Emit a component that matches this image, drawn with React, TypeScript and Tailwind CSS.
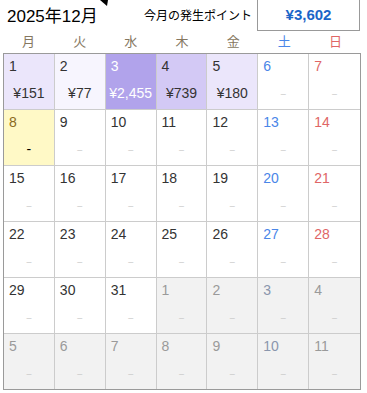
import React from "react";

const amounts: Record<number, { amt: string; bg: string; white?: boolean }> = {
  1: { amt: "¥151", bg: "bg-[#ebe6fb]" },
  2: { amt: "¥77", bg: "bg-[#f7f5fe]" },
  3: { amt: "¥2,455", bg: "bg-[#b1a3eb]", white: true },
  4: { amt: "¥739", bg: "bg-[#d3c9f5]" },
  5: { amt: "¥180", bg: "bg-[#ebe6fb]" },
};

export default function App() {
  const cells: { d: number; cur: boolean; dow: number }[] = [];
  for (let d = 1; d <= 31; d++) cells.push({ d, cur: true, dow: (d - 1) % 7 });
  for (let d = 1; d <= 11; d++) cells.push({ d, cur: false, dow: (31 + d - 1) % 7 });
  const weekdays = ["月", "火", "水", "木", "金", "土", "日"];
  const font = { fontFamily: '"Liberation Sans", Arial, "Noto Sans CJK JP", sans-serif' };

  return (
    <div className="w-[367px] h-[393px] bg-white relative overflow-hidden" style={font}>
      <div className="flex items-center h-[31px]">
        <div className="pl-[7px] text-[17px] text-black leading-none pt-[2px]">2025年12月</div>
        <svg className="absolute left-[100px] top-0" width="8" height="6" viewBox="0 0 8 6">
          <polygon points="0,0 8,0 7,6" fill="#000" />
        </svg>
        <div className="ml-auto flex items-center">
          <div className="text-[12px] text-black mr-[5px]">今月の発生ポイント</div>
          <div className="w-[103px] h-[31px] mr-[7px] border border-[#999] border-t-0 flex items-center justify-center text-[15px] font-bold text-[#1b65c8]">
            ¥3,602
          </div>
        </div>
      </div>
      <div className="ml-[3px] w-[358px] grid grid-cols-7 h-[22px] items-center">
        {weekdays.map((w, i) => (
          <div
            key={w}
            className={`text-center text-[13px] ${i === 5 ? "text-[#4a86e8]" : i === 6 ? "text-[#e06666]" : "text-[#85775f]"}`}
          >
            {w}
          </div>
        ))}
      </div>
      <div className="ml-[3px] w-[358px] border border-[#9a9a9a] grid grid-cols-7">
        {cells.map((c, i) => {
          const col = i % 7;
          const row = Math.floor(i / 7);
          const a = c.cur ? amounts[c.d] : undefined;
          const today = c.cur && c.d === 8;
          let bg = c.cur ? "bg-white" : "bg-[#f2f2f2]";
          if (a) bg = a.bg;
          if (today) bg = "bg-[#fff9c6]";
          let numColor = "text-[#333333]";
          if (c.cur) {
            if (c.dow === 5) numColor = "text-[#4a86e8]";
            if (c.dow === 6) numColor = "text-[#e06666]";
            if (a?.white) numColor = "text-white";
            if (today) numColor = "text-[#8a6a20]";
          } else {
            numColor = c.dow === 5 ? "text-[#8a96ad]" : "text-[#9a9a9a]";
          }
          return (
            <div
              key={i}
              className={`flex flex-col ${bg} ${col < 6 ? "border-r border-[#cccccc]" : ""} ${row < 5 ? "h-[56px] border-b border-[#cccccc]" : "h-[55px]"}`}
            >
              <div className={`pl-[5px] pt-[3px] text-[14px] leading-[18px] ${numColor}`}>{c.d}</div>
              <div className="flex-1 flex items-center justify-center pt-[2px]">
                {a ? (
                  <span className={`text-[14px] ${a.white ? "text-white" : "text-[#333333]"}`}>{a.amt}</span>
                ) : today ? (
                  <span className="text-[14px] text-black">-</span>
                ) : (
                  <span className="text-[9px] text-[#c8c8c8] pt-[4px]">–</span>
                )}
              </div>
            </div>
          );
        })}
      </div>
    </div>
  );
}
